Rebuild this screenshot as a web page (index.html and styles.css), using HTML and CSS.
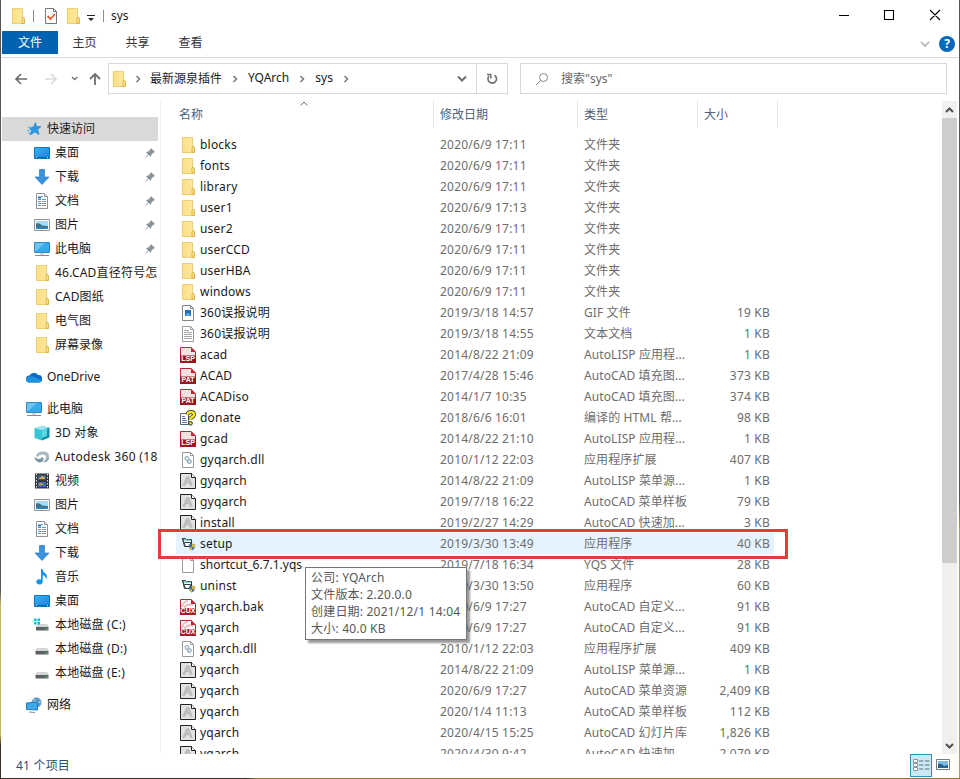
FILE: index.html
```
<!DOCTYPE html>
<html lang="zh-CN">
<head>
    <meta charset="UTF-8">
    <meta name="viewport" content="width=device-width, initial-scale=1.0">
    <title>sys</title>
    <link rel="stylesheet" href="styles.css">
</head>
<body>
    <!-- Icon sprites -->
    <svg class="sprites">
        <linearGradient id="blueFill" x1="0" y1="0" x2="1" y2="1">
            <stop offset="0" stop-color="#3db2f5"/><stop offset="1" stop-color="#0d83dc"/>
        </linearGradient>
        <linearGradient id="folderFill" x1="0" y1="0" x2="1" y2="0">
            <stop offset="0" stop-color="#fbdf84"/><stop offset="1" stop-color="#fde9a3"/>
        </linearGradient>
        <symbol id="folder" viewBox="0 0 16 16">
            <path d="M2.400.4h10.200v9l1.600 1v5.200H2.400z" fill="url(#folderFill)" stroke="#e6c761" stroke-width=".9"/>
            <path d="M12 15.500V10.500l1.200-1.500 1.200 1.500v5z" fill="#fce38d" stroke="#d9ae3c" stroke-width=".9"/>
        </symbol>
        <symbol id="star" viewBox="0 0 16 16">
            <path d="M9.500 1.500l1 4H15l-3.300 3 1.300 5-4-2.500-5 3 1.500-4.500-2.500-3 4.500-.5z" fill="#2b9be6" stroke="#1a7fc9" stroke-width=".6"/>
            <path d="M2 6.500h4M1 9.500h3M2 12h2" stroke="#58b4f0"/>
        </symbol>
        <symbol id="desktop" viewBox="0 0 16 16">
            <path d="M.5 2.500h15v11H.5z" fill="url(#blueFill)" stroke="#1274c4"/>
            <path d="M1 12.500h14" stroke="#0b5fa8"/><path d="M2 12.500h1M13 12.500h1" stroke="#cbe9ff"/>
        </symbol>
        <symbol id="download" viewBox="0 0 16 16">
            <path d="M5.500.5h5V8h4.500L8 15.500 1 8h4.500z" fill="#3b92dd" stroke="#2a7ac6" stroke-width=".7"/>
        </symbol>
        <symbol id="document" viewBox="0 0 16 16">
            <path d="M2.500.5h8l3 3v12h-11z" fill="#fff" stroke="#8d9499"/>
            <path d="M10.500.5v3h3" fill="#e5e9eb" stroke="#8d9499"/>
            <path d="M7 3.500h2M4 6.500h3M8 6.500h4M4 8.500h3M8 8.500h4M4 10.500h8M4 12.500h3M8 12.500h4" stroke="#4f9fd2"/>
            <path d="M4 4.500h3" stroke="#2473a9" stroke-width="2"/>
        </symbol>
        <symbol id="picture" viewBox="0 0 16 16">
            <path d="M.5 2.500h15v11H.5z" fill="#fff" stroke="#8c979d"/>
            <path d="M2 4h12v8H2z" fill="#a9dcf5"/><path d="M2 6.500q4-1 6 2l6 .5v3H2z" fill="#3d7289"/><path d="M2 10l12 .5V12H2z" fill="#2b87c4"/>
        </symbol>
        <symbol id="computer" viewBox="0 0 16 16">
            <path d="M.5 1.500h15v10H.5z" fill="#6cc5f6" stroke="#3789bb"/>
            <path d="M1 11L11 2h4v9z" fill="#3aa8ec"/>
            <path d="M6 12h4v2H6z" fill="#d3dbdf"/><path d="M1 14.500h14" stroke="#7e929e"/>
        </symbol>
        <symbol id="cloud" viewBox="0 0 16 16">
            <path d="M3.500 13.500a3.500 3.500 0 0 1 0-7A5 5 0 0 1 12 6a3.600 3.600 0 0 1 1 7.500z" fill="#0f6cc2"/>
            <path d="M2 8q5-2 8 1l5.500 2q0 2.500-2.500 2.500H3.500Q0 13.500.3 10z" fill="#1e93de"/>
        </symbol>
        <symbol id="cube" viewBox="0 0 16 16">
            <path d="M.5 3l8-2.500 7 2L8 5z" fill="#9be6ee"/><path d="M.5 3L8 5v10.500L.5 13z" fill="#39c4d6"/><path d="M8 5l7.500-2.500v10L8 15.500z" fill="#128fa6"/><path d="M8 5l5-1.700v7.500L8 13z" fill="#5ad6e2"/>
        </symbol>
        <symbol id="swirl" viewBox="0 0 16 16">
            <path d="M2 7q1-4.500 7-4.500 6 0 6 4.500 0 5-6 6 3-2 3-4.500Q12 5.500 8.500 5.500T4 8z" fill="#a9bac3"/>
            <path d="M.5 7.500q2 2.500 5 2.500 2 0 2-2 2.500.5 2 3-1 2.500-4 2.500-4.500-1-5-6z" fill="#7797a5"/>
            <path d="M9 13.500q6-.5 6.500-6-2 3.500-4 4z" fill="#7797a5"/>
        </symbol>
        <symbol id="video" viewBox="0 0 16 16">
            <path d="M1 .5h14v15H1z" fill="#35383b"/>
            <path d="M2.500 1v14M13.500 1v14" stroke="#dfe2e4" stroke-dasharray="1.500 1.500"/>
            <path d="M4 2h8v5H4z" fill="#34579b"/><path d="M4 9h8v5H4z" fill="#4368b4"/>
            <path d="M4 6l4-3 3 1v2zM4 12l3-2 3 2z" fill="#d2af39"/>
        </symbol>
        <symbol id="music" viewBox="0 0 16 16">
            <path d="M7 0h1.500q.5 3 3 4.500 2.500 2 .5 6 .2-3-3.300-4.500V13a3.200 2.700 0 1 1-1.700-2.500z" fill="#1693e6"/>
        </symbol>
        <symbol id="drive" viewBox="0 0 16 16">
            <path d="M3 7h10l2 3H1z" fill="#d3d6d7"/><path d="M1.500 10h13v3.500h-13z" fill="#5a5f61"/><path d="M11.500 12h2" stroke="#63dd63"/>
        </symbol>
        <symbol id="windrive" viewBox="0 0 16 16">
            <path d="M3 7h10l2 3H2z" fill="#d3d6d7"/><path d="M2 10h12.500v3.500H2z" fill="#5a5f61"/><path d="M11.500 12h2" stroke="#63dd63"/>
            <path d="M0 1.500h2.500V4H0zM3.500 1.500H6V4H3.500zM0 5h2.500v2.500H0zM3.500 5H6v2.500H3.500z" fill="#21b5d8"/>
        </symbol>
        <symbol id="network" viewBox="0 0 16 16">
            <circle cx="10.500" cy="5.500" r="5" fill="#5a9dc6"/><path d="M7 2q4 2 3 8M6 5q5 1 9 0" stroke="#b9dded" fill="none"/>
            <path d="M.5 6l11-1v8l-11-.5z" fill="#3fa7ec" stroke="#2479b5"/><path d="M3 15l6 .5" stroke="#7e929e"/>
        </symbol>
        <symbol id="pin" viewBox="0 0 12 12">
            <path d="M7 1l4 4-1.300.5L7.500 7.500 7 10 4.600 7.800 1 11.300l-.3-.3 3.200-3.800L2 5l2.500-.5L6.500 2.300z" fill="#87939a"/>
        </symbol>
        <symbol id="gif" viewBox="0 0 16 16">
            <path d="M2.500.5h8l3 3v12h-11z" fill="#fff" stroke="#7f8689"/><path d="M10.500.5v3h3" fill="none" stroke="#7f8689"/>
            <path d="M5 5h6v6H5z" fill="#206fbb"/><path d="M5.500 10.500L8 8l2.500 2.500z" fill="#7dc5f5"/>
        </symbol>
        <symbol id="text" viewBox="0 0 16 16">
            <path d="M2.500.5h8l3 3v12h-11z" fill="#fff" stroke="#9a9a9a"/><path d="M10.500.5v3h3" fill="none" stroke="#9a9a9a"/>
            <path d="M4 4.500h5M4 6.500h8M4 8.500h8M4 10.500h8M4 12.500h8" stroke="#a6a6a6"/>
        </symbol>
        <symbol id="cad" viewBox="0 0 16 16">
            <path d="M.5.500h10.500l4.500 4.500v10.500H.5z" fill="#f8dfe0" stroke="#bd2632"/>
            <path d="M0 8.500h16V16H0z" fill="#9c1420"/><path d="M11 0l5 5h-5z" fill="#c52734"/>
        </symbol>
        <symbol id="cux" viewBox="0 0 16 16">
            <path d="M.5.500h10.500l4.500 4.500v10.500H.5z" fill="#fff" stroke="#bd2632"/>
            <path d="M2 8q1-6 6-6M4 8.500q4-4.500 9-2.500" stroke="#f0bfc1" stroke-width="2" fill="none"/>
            <path d="M0 9h16v7H0z" fill="#a91b28"/><path d="M11 0l5 5h-5z" fill="#c52734"/>
        </symbol>
        <symbol id="help" viewBox="0 0 16 16">
            <path d="M.5 3.500h8v11h-8z" fill="#fff" stroke="#5b6273"/><path d="M2 6.500h3M2 8.500h4M2 10.500h5M2 12.500h5" stroke="#6178a6"/>
            <path d="M7.500 4.500q.5-2.500 3.500-2.500t3 2.500q0 2-3.500 3.500V9.500" fill="none" stroke="#222" stroke-width="3.800"/>
            <path d="M7.500 4.500q.5-2.500 3.500-2.500t3 2.500q0 2-3.500 3.500V9.500" fill="none" stroke="#f7ea1c" stroke-width="2.500"/>
            <circle cx="10.500" cy="13.300" r="1.800" fill="#f7ea1c" stroke="#222"/>
        </symbol>
        <symbol id="dll" viewBox="0 0 16 16">
            <path d="M2.500.5h8l3 3v12h-11z" fill="#fff" stroke="#9a9a9a"/><path d="M10.500.5v3h3" fill="none" stroke="#9a9a9a"/>
            <circle cx="7" cy="6.500" r="2" fill="#e6eef3" stroke="#8ba3b5"/><circle cx="9.300" cy="9.500" r="2" fill="#d0dde5" stroke="#8ba3b5"/>
        </symbol>
        <symbol id="acad" viewBox="0 0 16 16">
            <path d="M.5.500h11l4 4v11H.5z" fill="#e2e2e2" stroke="#222"/>
            <path d="M11.500.5v4h4" fill="#fff" stroke="#222"/>
            <path d="M2.500 12.500L6.500 3.500H9l3.500 9H10L9.300 10H6l-1 2.500zM7 8.500h2L8.300 5.500z" fill="#bdbdbd" stroke="#b0b0b0" stroke-width=".4"/>
        </symbol>
        <symbol id="setup" viewBox="0 0 16 16">
            <path d="M2.500 2.500h3l1 1h5v7h-6z" fill="#fff" stroke="#2d3c40"/><path d="M3 4h8" stroke="#2aa79c"/><path d="M2.500 2.500l2 8h6V6.500h-6" fill="none" stroke="#2d3c40"/>
            <path d="M8.700 8.500q2 0 3.200-1 1.300 1 3.300 1 0 4.500-3.300 6-3.200-1.500-3.200-6z" fill="#3d6fa8"/><path d="M12 7.600q1.200.9 3.200.9v2.800H12zM8.900 11.300H12v3.200q-2.400-1-3.100-3.200z" fill="#d9b83a"/>
        </symbol>
        <symbol id="blank" viewBox="0 0 16 16">
            <path d="M2.500.5h8l3 3v12h-11z" fill="#fff" stroke="#9a9a9a"/><path d="M10.500.5v3h3" fill="none" stroke="#9a9a9a"/>
        </symbol>
        <symbol id="right" viewBox="0 0 8 8"><path d="M2.500 1l3 3-3 3" fill="none" stroke="#777" stroke-width="1.500"/></symbol>
    </svg>

    <div class="window">
        <div class="titlebar">
            <svg class="icon"><use href="#folder"/></svg>
            <span class="divider first"></span>
            <svg class="icon check" viewBox="0 0 16 16">
                <path d="M2.500.5h8l3 3v12h-11z" fill="#fff" stroke="#777"/><path d="M10.500.5v3h3" fill="none" stroke="#777"/>
                <path d="M4.500 8l3 3 4.500-5" fill="none" stroke="#e0602d" stroke-width="1.800"/>
            </svg>
            <svg class="icon second"><use href="#folder"/></svg>
            <svg class="drop" width="8" height="8" viewBox="0 0 8 8"><path d="M0 1.500h8" stroke="#222"/><path d="M1 4h6L4 7z" fill="#222"/></svg>
            <span class="divider"></span>
            <span class="title">sys</span>
            <svg class="controls" width="104" height="14" viewBox="0 0 104 14">
                <path d="M1 6.500h10M46.500 1.500h9v9h-9zM92 1l10 10M102 1L92 11" fill="none" stroke="#000" stroke-width="1.100"/>
            </svg>
        </div>

        <div class="tabs">
            <span class="tab active">文件</span>
            <span class="tab">主页</span>
            <span class="tab">共享</span>
            <span class="tab">查看</span>
            <svg class="expand" width="10" height="8" viewBox="0 0 10 8"><path d="M1 2l4 4 4-4" fill="none" stroke="#a2a8ae" stroke-width="1.300"/></svg>
            <span class="help">?</span>
        </div>

        <div class="navbar">
            <svg class="arrows" width="92" height="16" viewBox="0 0 92 16">
                <path d="M13 8H2M7 3L2 8l5 5" fill="none" stroke="#6a6a6a" stroke-width="1.600"/>
                <path d="M31 8h11M37 3l5 5-5 5" fill="none" stroke="#dadada" stroke-width="1.600"/>
                <path d="M58 6l2.700 2.500L63.400 6" fill="none" stroke="#777" stroke-width="1.500"/>
                <path d="M81 14V3M76 8l5-5 5 5" fill="none" stroke="#707070" stroke-width="1.800"/>
            </svg>
            <div class="address">
                <svg class="icon"><use href="#folder"/></svg>
                <svg class="sep"><use href="#right"/></svg>
                <span class="crumb">最新源泉插件</span>
                <svg class="sep"><use href="#right"/></svg>
                <span class="crumb">YQArch</span>
                <svg class="sep"><use href="#right"/></svg>
                <span class="crumb">sys</span>
                <svg class="sep"><use href="#right"/></svg>
                <svg class="history" width="10" height="8" viewBox="0 0 10 8"><path d="M1 1.500l4 4 4-4" fill="none" stroke="#707070" stroke-width="2"/></svg>
                <div class="refresh">
                    <svg width="12" height="12" viewBox="0 0 12 12"><path d="M8.500 2.200A4.300 4.300 0 1 1 3 3" fill="none" stroke="#6d6d6d" stroke-width="1.600"/><path d="M1 1.500h3.800v4" fill="none" stroke="#6d6d6d" stroke-width="1.500"/></svg>
                </div>
            </div>
            <div class="search">
                <svg width="14" height="14" viewBox="0 0 14 14"><circle cx="8.500" cy="5.500" r="4" fill="none" stroke="#888"/><path d="M5.500 8.500L1 13" stroke="#888"/></svg>
                <span>搜索"sys"</span>
            </div>
        </div>

        <div class="main">
            <div class="sidebar">
                <div class="item root selected"><svg class="icon"><use href="#star"/></svg>快速访问</div>
                <div class="item"><svg class="icon"><use href="#desktop"/></svg>桌面<svg class="pin"><use href="#pin"/></svg></div>
                <div class="item"><svg class="icon"><use href="#download"/></svg>下载<svg class="pin"><use href="#pin"/></svg></div>
                <div class="item"><svg class="icon"><use href="#document"/></svg>文档<svg class="pin"><use href="#pin"/></svg></div>
                <div class="item"><svg class="icon"><use href="#picture"/></svg>图片<svg class="pin"><use href="#pin"/></svg></div>
                <div class="item"><svg class="icon"><use href="#computer"/></svg>此电脑<svg class="pin"><use href="#pin"/></svg></div>
                <div class="item long"><svg class="icon"><use href="#folder"/></svg>46.CAD直径符号怎</div>
                <div class="item long"><svg class="icon"><use href="#folder"/></svg>CAD图纸</div>
                <div class="item"><svg class="icon"><use href="#folder"/></svg>电气图</div>
                <div class="item"><svg class="icon"><use href="#folder"/></svg>屏幕录像</div>
                <div class="item root group"><svg class="icon"><use href="#cloud"/></svg>OneDrive</div>
                <div class="item root group"><svg class="icon"><use href="#computer"/></svg>此电脑</div>
                <div class="item long"><svg class="icon"><use href="#cube"/></svg>3D 对象</div>
                <div class="item wide"><svg class="icon"><use href="#swirl"/></svg>Autodesk 360 (184</div>
                <div class="item"><svg class="icon"><use href="#video"/></svg>视频</div>
                <div class="item"><svg class="icon"><use href="#picture"/></svg>图片</div>
                <div class="item"><svg class="icon"><use href="#document"/></svg>文档</div>
                <div class="item"><svg class="icon"><use href="#download"/></svg>下载</div>
                <div class="item"><svg class="icon"><use href="#music"/></svg>音乐</div>
                <div class="item"><svg class="icon"><use href="#desktop"/></svg>桌面</div>
                <div class="item long"><svg class="icon"><use href="#windrive"/></svg>本地磁盘 (C:)</div>
                <div class="item long"><svg class="icon"><use href="#drive"/></svg>本地磁盘 (D:)</div>
                <div class="item long"><svg class="icon"><use href="#drive"/></svg>本地磁盘 (E:)</div>
                <div class="item root group"><svg class="icon"><use href="#network"/></svg>网络</div>
            </div>

            <div class="files">
                <div class="header">
                    <span>名称<svg class="sort" width="8" height="5" viewBox="0 0 8 5"><path d="M.5 4.500L4 1l3.500 3.500" fill="none" stroke="#666"/></svg></span>
                    <span>修改日期</span>
                    <span>类型</span>
                    <span>大小</span>
                </div>
                <div class="rows">
                    <div class="row"><span class="name"><svg class="icon"><use href="#folder"/></svg>blocks</span><span class="date">2020/6/9 17:11</span><span class="type">文件夹</span><span class="size"></span></div>
                    <div class="row"><span class="name"><svg class="icon"><use href="#folder"/></svg>fonts</span><span class="date">2020/6/9 17:11</span><span class="type">文件夹</span><span class="size"></span></div>
                    <div class="row"><span class="name"><svg class="icon"><use href="#folder"/></svg>library</span><span class="date">2020/6/9 17:11</span><span class="type">文件夹</span><span class="size"></span></div>
                    <div class="row"><span class="name"><svg class="icon"><use href="#folder"/></svg>user1</span><span class="date">2020/6/9 17:13</span><span class="type">文件夹</span><span class="size"></span></div>
                    <div class="row"><span class="name"><svg class="icon"><use href="#folder"/></svg>user2</span><span class="date">2020/6/9 17:11</span><span class="type">文件夹</span><span class="size"></span></div>
                    <div class="row"><span class="name"><svg class="icon"><use href="#folder"/></svg>userCCD</span><span class="date">2020/6/9 17:11</span><span class="type">文件夹</span><span class="size"></span></div>
                    <div class="row"><span class="name"><svg class="icon"><use href="#folder"/></svg>userHBA</span><span class="date">2020/6/9 17:11</span><span class="type">文件夹</span><span class="size"></span></div>
                    <div class="row"><span class="name"><svg class="icon"><use href="#folder"/></svg>windows</span><span class="date">2020/6/9 17:11</span><span class="type">文件夹</span><span class="size"></span></div>
                    <div class="row"><span class="name"><svg class="icon"><use href="#gif"/></svg>360误报说明</span><span class="date">2019/3/18 14:57</span><span class="type">GIF 文件</span><span class="size">19 KB</span></div>
                    <div class="row"><span class="name"><svg class="icon"><use href="#text"/></svg>360误报说明</span><span class="date">2019/3/18 14:55</span><span class="type">文本文档</span><span class="size">1 KB</span></div>
                    <div class="row"><span class="name"><span class="badge"><svg class="icon"><use href="#cad"/></svg><b>LSP</b></span>acad</span><span class="date">2014/8/22 21:09</span><span class="type">AutoLISP 应用程...</span><span class="size">1 KB</span></div>
                    <div class="row"><span class="name"><span class="badge"><svg class="icon"><use href="#cad"/></svg><b>PAT</b></span>ACAD</span><span class="date">2017/4/28 15:46</span><span class="type">AutoCAD 填充图...</span><span class="size">373 KB</span></div>
                    <div class="row"><span class="name"><span class="badge"><svg class="icon"><use href="#cad"/></svg><b>PAT</b></span>ACADiso</span><span class="date">2014/1/7 10:35</span><span class="type">AutoCAD 填充图...</span><span class="size">374 KB</span></div>
                    <div class="row"><span class="name"><svg class="icon"><use href="#help"/></svg>donate</span><span class="date">2018/6/6 16:01</span><span class="type">编译的 HTML 帮...</span><span class="size">98 KB</span></div>
                    <div class="row"><span class="name"><span class="badge"><svg class="icon"><use href="#cad"/></svg><b>LSP</b></span>gcad</span><span class="date">2014/8/22 21:10</span><span class="type">AutoLISP 应用程...</span><span class="size">1 KB</span></div>
                    <div class="row"><span class="name"><svg class="icon"><use href="#dll"/></svg>gyqarch.dll</span><span class="date">2010/1/12 22:03</span><span class="type">应用程序扩展</span><span class="size">407 KB</span></div>
                    <div class="row"><span class="name"><svg class="icon"><use href="#acad"/></svg>gyqarch</span><span class="date">2014/8/22 21:09</span><span class="type">AutoLISP 菜单源...</span><span class="size">1 KB</span></div>
                    <div class="row"><span class="name"><svg class="icon"><use href="#acad"/></svg>gyqarch</span><span class="date">2019/7/18 16:22</span><span class="type">AutoCAD 菜单样板</span><span class="size">79 KB</span></div>
                    <div class="row"><span class="name"><svg class="icon"><use href="#acad"/></svg>install</span><span class="date">2019/2/27 14:29</span><span class="type">AutoCAD 快速加...</span><span class="size">3 KB</span></div>
                    <div class="row hover"><span class="name"><svg class="icon"><use href="#setup"/></svg>setup</span><span class="date">2019/3/30 13:49</span><span class="type">应用程序</span><span class="size">40 KB</span></div>
                    <div class="row"><span class="name tight"><svg class="icon"><use href="#blank"/></svg>shortcut_6.7.1.yqs</span><span class="date">2019/7/18 16:34</span><span class="type">YQS 文件</span><span class="size">28 KB</span></div>
                    <div class="row"><span class="name"><svg class="icon"><use href="#setup"/></svg>uninst</span><span class="date">2019/3/30 13:50</span><span class="type">应用程序</span><span class="size">60 KB</span></div>
                    <div class="row"><span class="name"><span class="badge"><svg class="icon"><use href="#cux"/></svg><b>CUX</b></span>yqarch.bak</span><span class="date">2020/6/9 17:27</span><span class="type">AutoCAD 自定义...</span><span class="size">91 KB</span></div>
                    <div class="row"><span class="name"><span class="badge"><svg class="icon"><use href="#cux"/></svg><b>CUX</b></span>yqarch</span><span class="date">2020/6/9 17:27</span><span class="type">AutoCAD 自定义...</span><span class="size">91 KB</span></div>
                    <div class="row"><span class="name"><svg class="icon"><use href="#dll"/></svg>yqarch.dll</span><span class="date">2010/1/12 22:03</span><span class="type">应用程序扩展</span><span class="size">409 KB</span></div>
                    <div class="row"><span class="name"><svg class="icon"><use href="#acad"/></svg>yqarch</span><span class="date">2014/8/22 21:09</span><span class="type">AutoLISP 菜单源...</span><span class="size">1 KB</span></div>
                    <div class="row"><span class="name"><svg class="icon"><use href="#acad"/></svg>yqarch</span><span class="date">2020/6/9 17:27</span><span class="type">AutoCAD 菜单资源</span><span class="size">2,409 KB</span></div>
                    <div class="row"><span class="name"><svg class="icon"><use href="#acad"/></svg>yqarch</span><span class="date">2020/1/4 11:13</span><span class="type">AutoCAD 菜单样板</span><span class="size">112 KB</span></div>
                    <div class="row"><span class="name"><svg class="icon"><use href="#acad"/></svg>yqarch</span><span class="date">2020/4/15 15:25</span><span class="type">AutoCAD 幻灯片库</span><span class="size">1,826 KB</span></div>
                    <div class="row"><span class="name"><svg class="icon"><use href="#acad"/></svg>yqarch</span><span class="date">2020/4/30 9:42</span><span class="type">AutoCAD 快速加...</span><span class="size">2,079 KB</span></div>
                </div>
            </div>

            <div class="scrollbar">
                <svg width="15" height="17" viewBox="0 0 15 17"><path d="M4 11l3.500-3.500L11 11" fill="none" stroke="#505050" stroke-width="2"/></svg>
                <div class="thumb"></div>
                <svg width="15" height="17" viewBox="0 0 15 17"><path d="M4 7l3.500 3.500L11 7" fill="none" stroke="#505050" stroke-width="2"/></svg>
            </div>
        </div>

        <div class="statusbar">
            <span class="count">41 个项目</span>
            <div class="view active">
                <svg width="17" height="13" viewBox="0 0 17 13"><path d="M.5.5h4v3h-4zM.5 4.500h4v3h-4zM.5 8.500h4v3h-4z" fill="#fff" stroke="#8a969d"/><path d="M6 2h4.500M12 2h4.500M6 6h4.500M12 6h4.500M6 10h4.500M12 10h4.500" stroke="#5f6f7a"/></svg>
            </div>
            <svg class="large" width="14" height="12" viewBox="0 0 14 12"><path d="M.5.5h13v10H.5z" fill="#fff" stroke="#6c7a83"/><path d="M2 2h10v7H2z" fill="#79b9e4"/><path d="M2 5q4-1 6 2l4-1v3H2z" fill="#2a628b"/></svg>
        </div>
    </div>

    <!-- Overlays -->
    <div class="marker"></div>
    <div class="tooltip">
        <p>公司: YQArch</p>
        <p>文件版本: 2.20.0.0</p>
        <p>创建日期: 2021/12/1 14:04</p>
        <p>大小: 40.0 KB</p>
    </div>
</body>
</html>
```
FILE: styles.css
```
* {
    box-sizing: border-box;
}

body {
    margin: 0;
    width: 960px;
    height: 779px;
    overflow: hidden;
    position: relative;
    font-family: "Noto Sans", "Noto Sans CJK SC", sans-serif;
    font-size: 12px;
    color: #1a1a1a;
    background:
        linear-gradient(90deg, #3a2c22 246px, #8d7836 256px) 0 100% / 100% 2px no-repeat,
        linear-gradient(#555 0, #555 500px, #b5a136 530px, #b5a136 779px) 100% 0 / 2px 100% no-repeat,
        linear-gradient(#555 0, #555 590px, #c9b75c 605px, #c9b75c 735px, #3a2c22 745px);
}

.sprites {
    position: absolute;
    width: 0;
    height: 0;
}

.window {
    display: flex;
    flex-direction: column;
    width: 958px;
    height: 778px;
    margin-left: 1px;
    padding: 0 1px;
    background: #fff;
}

.icon {
    width: 16px;
    height: 16px;
    flex: none;
}

/* Title bar */
.titlebar {
    display: flex;
    align-items: center;
    height: 31px;
    padding-left: 8px;
}

.divider {
    width: 1px;
    height: 12px;
    background: #8a8a8a;
}

.divider.first {
    margin-left: 7px;
}

.check {
    margin-left: 9px;
}

.second {
    margin-left: 6px;
}

.drop {
    margin: 4px 0 0 6px;
}

.drop + .divider {
    margin-left: 8px;
}

.title {
    margin-left: 7px;
}

.controls {
    margin-left: auto;
    margin-right: 16px;
}

/* Ribbon tabs */
.tabs {
    display: flex;
    align-items: center;
    height: 27px;
    border-bottom: 1px solid #dadbdc;
    padding-bottom: 3px;
}

.tab {
    width: 53px;
    height: 23px;
    line-height: 24px;
    text-align: center;
    color: #333;
}

.tab.active {
    width: 56px;
    background: #0063b1;
    color: #fff;
}

.expand {
    margin: 2px 9px 0 auto;
}

.help {
    width: 16px;
    height: 16px;
    margin: 2px 3px 0 0;
    border-radius: 50%;
    background: #0868b9;
    color: #fff;
    font-weight: bold;
    line-height: 16px;
    text-align: center;
}

/* Address bar */
.navbar {
    display: flex;
    align-items: center;
    height: 42px;
    padding: 0 11px 1px 12px;
}

.address,
.search {
    display: flex;
    align-items: center;
    height: 31px;
    border: 1px solid #d9d9d9;
}

.address {
    width: 400px;
    margin-left: 2px;
    padding-left: 2px;
}

.address .sep {
    width: 8px;
    height: 8px;
    margin: 0 9px 0 9px;
}

.address .icon + .sep {
    margin: 0 8px 0 7px;
}

.crumb {
    padding-bottom: 2px;
}

.history {
    margin-left: auto;
    margin-right: 9px;
}

.refresh {
    display: flex;
    align-items: center;
    justify-content: center;
    width: 31px;
    height: 29px;
    border-left: 1px solid #d9d9d9;
}

.search {
    flex: 1;
    margin-left: 12px;
    padding-left: 14px;
    color: #666;
}

.search span {
    margin-left: 12px;
    padding-bottom: 1px;
}

/* Main area */
.main {
    display: flex;
    height: 654px;
}

.sidebar {
    width: 159px;
    padding-top: 17px;
    border-right: 1px solid #f3f3f3;
}

.item {
    display: flex;
    align-items: center;
    width: 156px;
    height: 24px;
    padding-left: 32px;
    line-height: 22px;
    padding-bottom: 1px;
    overflow: hidden;
    white-space: nowrap;
}

.item.root {
    padding-left: 24px;
}

.item.group {
    margin-top: 8px;
}

.item.long {
    letter-spacing: 0.2px;
}

.item.wide {
    letter-spacing: 0.35px;
}

.item.selected {
    background: #d9d9d9;
}

.item .icon {
    margin-right: 5px;
}

.pin {
    width: 12px;
    height: 12px;
    margin-left: auto;
    margin-right: 2px;
}

.files {
    width: 781px;
    overflow: hidden;
}

.header {
    display: grid;
    grid-template-columns: 273px 144px 120px 80px;
    height: 34px;
    color: #4c607a;
}

.header span {
    height: 28px;
    line-height: 30px;
    border-right: 1px solid #e5e5e5;
    padding-left: 6px;
    position: relative;
}

.header span:first-child {
    padding-left: 18px;
}

.sort {
    position: absolute;
    top: 1px;
    left: 139px;
}

.rows {
    height: 620px;
    overflow: hidden;
}

.row {
    display: grid;
    grid-template-columns: 258px 144px 120px 76px;
    width: 598px;
    height: 21px;
    margin-left: 15px;
    line-height: 21px;
    color: #6d6d6d;
    white-space: nowrap;
}

.row.hover {
    background: #e5f3ff;
}

.name {
    display: flex;
    align-items: center;
    padding-left: 4px;
    padding-bottom: 1px;
    line-height: 22px;
    color: #1a1a1a;
    letter-spacing: 0.2px;
}

.name.tight {
    letter-spacing: 0;
}

.name > .icon,
.badge {
    margin-right: 4px;
}

.badge {
    position: relative;
    width: 16px;
    height: 16px;
}

.badge .icon {
    display: block;
}

.badge b {
    position: absolute;
    left: 0;
    bottom: 0;
    width: 16px;
    font: bold 7px/8px "Liberation Sans", sans-serif;
    letter-spacing: 0;
    text-align: center;
    color: #fff;
}

.date,
.type {
    padding-left: 6px;
    letter-spacing: 0.2px;
}

.type {
    letter-spacing: 0.1px;
}

.size {
    padding-right: 4px;
    text-align: right;
    letter-spacing: 0.2px;
}

/* Scrollbar */
.scrollbar {
    display: flex;
    flex-direction: column;
    width: 15px;
    height: 653px;
    margin-top: 1px;
    background: #f0f0f0;
}

.thumb {
    height: 445px;
    margin-bottom: auto;
    background: #cdcdcd;
}

/* Status bar */
.statusbar {
    display: flex;
    align-items: center;
    height: 23px;
    padding-left: 14px;
    color: #334a6b;
}

.count {
    padding-bottom: 2px;
    letter-spacing: 0.2px;
}

.view {
    display: flex;
    align-items: center;
    justify-content: center;
    width: 22px;
    height: 23px;
    margin-left: auto;
    border: 1px solid #2f93c5;
    background: #cbe8f6;
}

.large {
    margin: 0 8px 2px 4px;
}

/* Red frame around the setup row */
.marker {
    position: absolute;
    left: 158px;
    top: 529px;
    width: 630px;
    height: 30px;
    border: 3px solid #e53b3b;
}

.tooltip {
    position: absolute;
    left: 305px;
    top: 567px;
    width: 162px;
    height: 73px;
    padding: 1px 5px;
    border: 1px solid #767676;
    background: #fff;
    box-shadow: 3px 3px 2px rgba(0, 0, 0, 0.4);
    color: #575757;
    white-space: nowrap;
}

.tooltip p {
    margin: 0;
    line-height: 17px;
    letter-spacing: 0.2px;
}
```
